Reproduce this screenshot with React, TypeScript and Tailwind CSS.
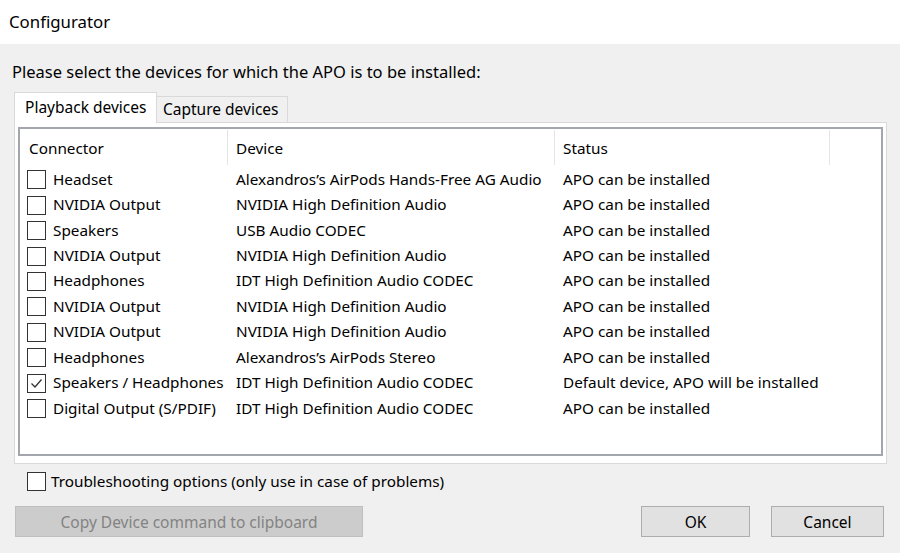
import React from "react";

const rows: { c: string; d: string; s: string; checked?: boolean }[] = [
  { c: "Headset", d: "Alexandros’s AirPods Hands-Free AG Audio", s: "APO can be installed" },
  { c: "NVIDIA Output", d: "NVIDIA High Definition Audio", s: "APO can be installed" },
  { c: "Speakers", d: "USB Audio CODEC", s: "APO can be installed" },
  { c: "NVIDIA Output", d: "NVIDIA High Definition Audio", s: "APO can be installed" },
  { c: "Headphones", d: "IDT High Definition Audio CODEC", s: "APO can be installed" },
  { c: "NVIDIA Output", d: "NVIDIA High Definition Audio", s: "APO can be installed" },
  { c: "NVIDIA Output", d: "NVIDIA High Definition Audio", s: "APO can be installed" },
  { c: "Headphones", d: "Alexandros’s AirPods Stereo", s: "APO can be installed" },
  { c: "Speakers / Headphones", d: "IDT High Definition Audio CODEC", s: "Default device, APO will be installed", checked: true },
  { c: "Digital Output (S/PDIF)", d: "IDT High Definition Audio CODEC", s: "APO can be installed" },
];

function Check({ checked }: { checked?: boolean }) {
  return (
    <div className="w-[19px] h-[19px] border border-[#333333] bg-white shrink-0 flex items-center justify-center">
      {checked && (
        <svg width="15" height="15" viewBox="0 0 15 15">
          <polyline points="2.5,7.5 6,11 12.5,3.5" fill="none" stroke="#333333" strokeWidth="1.3" />
        </svg>
      )}
    </div>
  );
}

export default function App() {
  return (
    <div
      className="w-[900px] h-[553px] bg-[#f0f0f0] flex flex-col text-black text-[15.3px] leading-[20px] overflow-hidden"
      style={{ fontFamily: '"Noto Sans", "Open Sans", sans-serif' }}
    >
      <div className="h-[44px] bg-white flex items-center pl-[9px] text-[16.8px]">Configurator</div>
      <div className="flex flex-col pl-[14px]">
        <div className="mt-[18px] h-[20px] ml-[-2px] flex items-center text-[16.5px]">
          <span>Please select the devices for which the APO is to be installed:</span>
        </div>
        <div className="mt-[10px] flex items-end h-[31px] relative z-10 -mb-px text-[15.5px]">
          <div className="w-[143px] h-[31px] bg-white border border-b-0 border-[#d9d9d9] flex items-center pl-[10px] pb-[3px]">
            Playback devices
          </div>
          <div className="w-[131px] h-[27px] border-t border-r border-[#d9d9d9] flex items-center pl-[6px] pb-[3px]">
            Capture devices
          </div>
        </div>
        <div className="w-[873px] h-[342px] bg-white border border-[#d9d9d9] pt-[4px] pl-[3px]">
          <div className="w-[865px] h-[329px] border-2 border-[#a3a6ad] bg-white flex flex-col">
            <div className="h-[38px] flex shrink-0">
              <div className="w-[207px] flex items-center pl-[9px] pb-[1px]">Connector</div>
              <div className="w-px bg-[#e5e5e5] mt-[1px] mb-[2px]" />
              <div className="w-[326px] flex items-center pl-[8px] pb-[1px]">Device</div>
              <div className="w-px bg-[#e5e5e5] mt-[1px] mb-[2px]" />
              <div className="w-[274px] flex items-center pl-[8px] pb-[1px]">Status</div>
              <div className="w-px bg-[#e5e5e5] mt-[1px] mb-[2px]" />
            </div>
            {rows.map((r, i) => (
              <div key={i} className="h-[25.44px] flex items-center shrink-0">
                <div className="w-[207px] flex items-center pl-[7px] gap-[7px]">
                  <Check checked={r.checked} />
                  <span className="whitespace-nowrap -mt-[2px]">{r.c}</span>
                </div>
                <div className="w-[327px] pl-[9px] whitespace-nowrap -mt-[2px]">{r.d}</div>
                <div className="w-[275px] pl-[9px] whitespace-nowrap -mt-[2px]">{r.s}</div>
              </div>
            ))}
          </div>
        </div>
        <div className="mt-[8px] h-[19px] flex items-center pl-[13px] gap-[5px]">
          <Check />
          <span className="-mt-[1px]">Troubleshooting options (only use in case of problems)</span>
        </div>
        <div className="mt-[15px] flex items-center text-[15.5px]">
          <div className="ml-px w-[348px] h-[31px] bg-[#cccccc] border border-[#bfbfbf] text-[#838383] flex items-center justify-center">
            Copy Device command to clipboard
          </div>
          <div className="ml-[278px] w-[109px] h-[31px] bg-[#e1e1e1] border border-[#adadad] flex items-center justify-center">
            OK
          </div>
          <div className="ml-[21px] w-[113px] h-[31px] bg-[#e1e1e1] border border-[#adadad] flex items-center justify-center">
            Cancel
          </div>
        </div>
      </div>
    </div>
  );
}
